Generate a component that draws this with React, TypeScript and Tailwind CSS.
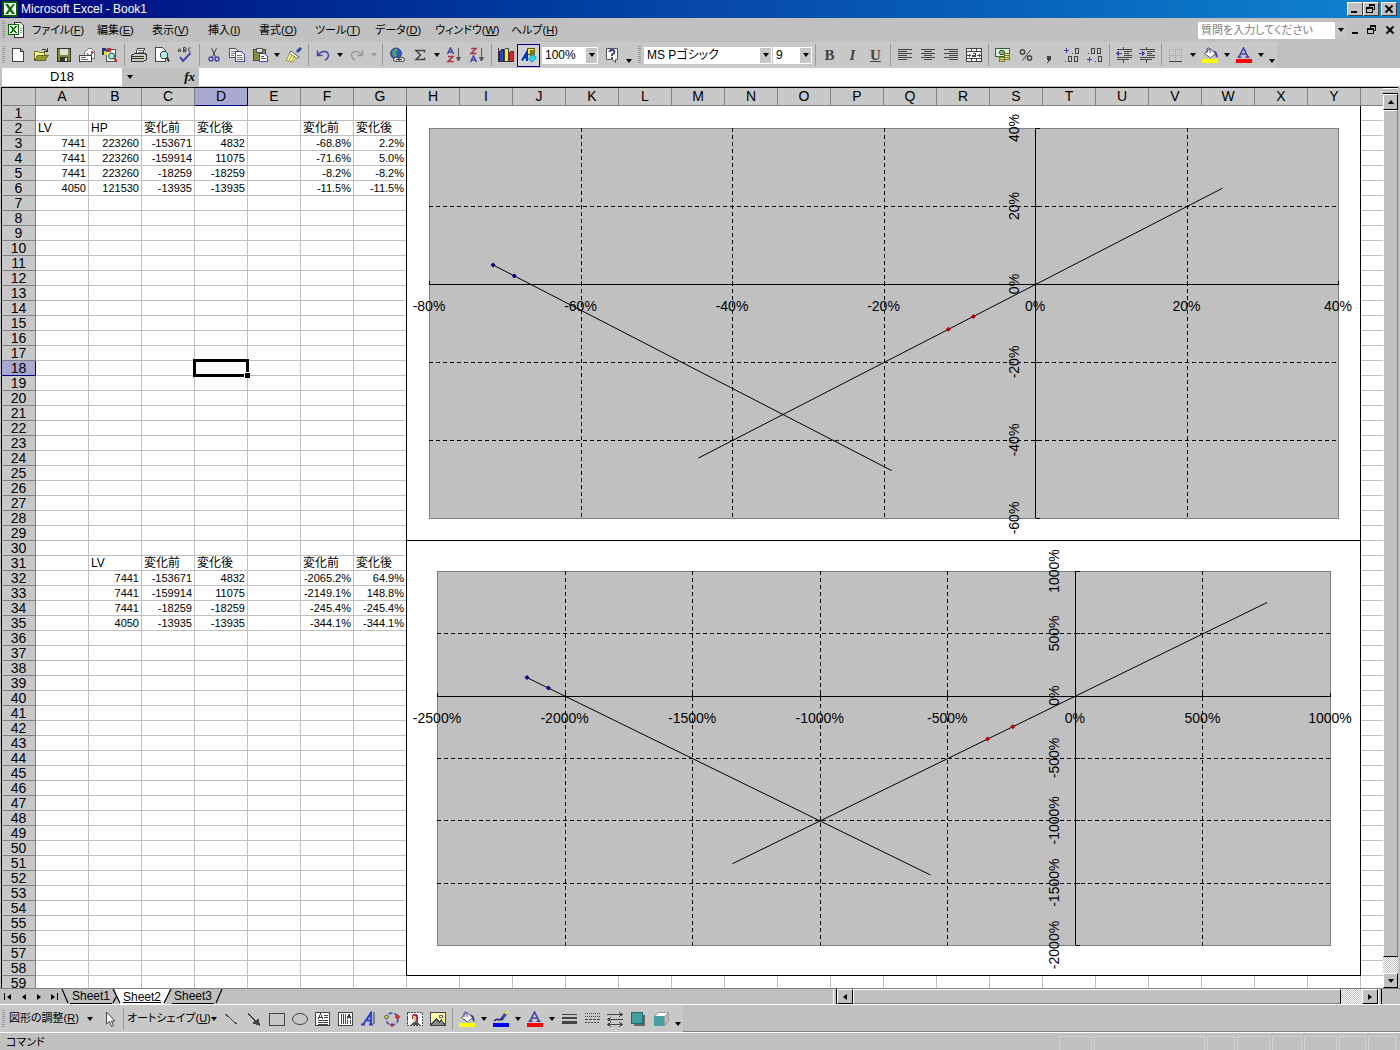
import React from "react";

const COLS = "ABCDEFGHIJKLMNOPQRSTUVWXY".split("");
const ROWS = Array.from({ length: 59 }, (_, i) => i + 1);

const CELLS: Record<number, Record<string, string>> = {
    2: { A: "LV", B: "HP", C: "変化前", D: "変化後", F: "変化前", G: "変化後" },
    3: { A: "7441", B: "223260", C: "-153671", D: "4832", F: "-68.8%", G: "2.2%" },
    4: { A: "7441", B: "223260", C: "-159914", D: "11075", F: "-71.6%", G: "5.0%" },
    5: { A: "7441", B: "223260", C: "-18259", D: "-18259", F: "-8.2%", G: "-8.2%" },
    6: { A: "4050", B: "121530", C: "-13935", D: "-13935", F: "-11.5%", G: "-11.5%" },
    31: { B: "LV", C: "変化前", D: "変化後", F: "変化前", G: "変化後" },
    32: { B: "7441", C: "-153671", D: "4832", F: "-2065.2%", G: "64.9%" },
    33: { B: "7441", C: "-159914", D: "11075", F: "-2149.1%", G: "148.8%" },
    34: { B: "7441", C: "-18259", D: "-18259", F: "-245.4%", G: "-245.4%" },
    35: { B: "4050", C: "-13935", D: "-13935", F: "-344.1%", G: "-344.1%" },
};

const MENUS: [string, string, string][] = [
    ["ファイル", "F", "w-[65px]"],
    ["編集", "E", "w-[55px]"],
    ["表示", "V", "w-[56px]"],
    ["挿入", "I", "w-[51px]"],
    ["書式", "O", "w-[56px]"],
    ["ツール", "T", "w-[60px]"],
    ["データ", "D", "w-[60px]"],
    ["ウィンドウ", "W", "w-[76px]"],
    ["ヘルプ", "H", "w-[60px]"],
];

/* ---------- icons, all on a 16px pixel grid ---------- */

const Svg = ({ children, smooth }: { children: React.ReactNode; smooth?: boolean }) => (
    <svg viewBox="0 0 16 16" className="h-4 w-4 shrink-0" fill="none" shapeRendering={smooth ? "auto" : "crispEdges"} aria-hidden="true">
        {children}
    </svg>
);

const Bucket = () => (
    <>
        <path d="M2.500 6.500l5.500-5 5.500 5-5 4.500z" fill="#fff" stroke="#555" />
        <path d="M5 6V2q1.500-2.500 3 0v4" stroke="#4040a0" />
        <path d="M11 3.500q5 0 4.500 7.500-2.500-1-2.500-5z" fill="#4040a0" />
    </>
);

const SortArrow = () => <path d="M12.500 1v11M10.500 10.500l2 3.500 2-3.500z" stroke="#555" fill="#555" />;

const ICONS: Record<string, React.ReactNode> = {
    excel: (
        <>
            <rect width="16" height="16" fill="#006000" />
            <rect x="2" y="2" width="12" height="12" fill="#fff" />
            <path d="M3 3h3l7 10h-3zM11 3h2L6 13H3z" fill="#007000" />
        </>
    ),
    doc: (
        <>
            <path d="M6.500.5h6l3 3v12h-9z" fill="#fff" stroke="#333" />
            <rect x="0" y="2" width="11" height="11" fill="#007000" />
            <rect x="1" y="3" width="9" height="9" fill="#fff" />
            <path d="M2 4h2l5 7H7zM7 4h2L4 11H2z" fill="#007000" />
            <path d="M12 6h2M12 8h2M12 10h2" stroke="#999" />
        </>
    ),
    new: <path d="M2.500 1.500h8l3 3v10h-11zM10.500 1.500v3h3" fill="#fff" stroke="#444" />,
    open: (
        <>
            <path d="M1.500 13.500v-9h4l1 1h5v3" fill="#ffff99" stroke="#777722" />
            <path d="M1.500 13.500l3-5.500h11l-3.500 5.500z" fill="#999933" stroke="#666622" />
            <path d="M9 3q3-2 5 1M14.500 1v3.500H11" stroke="#333" />
        </>
    ),
    save: (
        <>
            <rect x="1.500" y="1.500" width="13" height="13" fill="#888833" stroke="#333" />
            <rect x="4" y="2" width="8" height="6" fill="#ddd" />
            <rect x="4" y="10" width="8" height="4" fill="#333" />
            <rect x="9" y="11" width="2" height="3" fill="#eee" />
        </>
    ),
    mail: (
        <>
            <path d="M5.500 5.500l4-4h3l3 3v7h-10z" fill="#fff" stroke="#777" />
            <path d="M7 6l3.500 2.500L15 5" stroke="#999" />
            <rect x="12" y="4" width="2" height="2" fill="#c33" />
            <rect x=".5" y="8.500" width="12" height="6" fill="#fff" stroke="#444" />
            <path d="M2 10.500h5M2 12.500h7" stroke="#666" />
        </>
    ),
    search: (
        <>
            <rect x="4.500" y="2.500" width="9" height="12" fill="#fff" stroke="#555" />
            <rect x="0" y="1" width="4" height="3" fill="#223388" />
            <rect x="5" y="1" width="4" height="4" fill="#c03030" />
            <rect x="1" y="5" width="4" height="3" fill="#dddd22" />
            <rect x="0" y="4" width="2" height="4" fill="#333" />
            <circle cx="9.500" cy="9" r="3" fill="#99eeee" stroke="#333" />
            <path d="M12 11.500l3 3" stroke="#c03030" strokeWidth="2" />
        </>
    ),
    print: (
        <>
            <path d="M4.500 7.500l2-6h7l-2 6z" fill="#fff" stroke="#444" />
            <path d="M7 3.500h5M6.500 5.500h5" stroke="#777" />
            <path d="M.5 8.500l3-2h11l1 2v4l-3 2H.5z" fill="#ccc" stroke="#333" />
            <path d="M1 9.500h12M1 11.500h12" stroke="#333" />
            <rect x="8" y="10" width="3" height="1" fill="#dd3" />
        </>
    ),
    preview: (
        <>
            <path d="M1.500.5h7l3 3v11h-10z" fill="#fff" stroke="#444" />
            <circle cx="10" cy="8" r="3.500" fill="#aee" stroke="#444" />
            <path d="M12.500 10.500l3 4" stroke="#444" strokeWidth="2" />
        </>
    ),
    spell: (
        <>
            <path d="M1.500 5V2.500q1-2 2 0V5M1.500 3.500h2M6.500.5v4.500h2q1-1 0-2h-2 2q1-1 0-2.500zM13.500 1q-2-1-2 1.500t2 2" stroke="#444" />
            <path d="M3 10l3 4 7.500-8" stroke="#4444a8" strokeWidth="2" />
        </>
    ),
    cut: (
        <>
            <path d="M5.500 1l4 9M10.500 1l-4 9" stroke="#444" />
            <circle cx="5" cy="12" r="2" stroke="#4444a8" strokeWidth="1.400" />
            <circle cx="11" cy="12" r="2" stroke="#4444a8" strokeWidth="1.400" />
        </>
    ),
    copy: (
        <>
            <path d="M.5 1.500h6l2 2v7h-8z" fill="#fff" stroke="#555" />
            <path d="M2 4.500h4M2 6.500h4M2 8.500h3" stroke="#777" />
            <path d="M6.500 4.500h6l3 3v7h-9z" fill="#fff" stroke="#4444a8" />
            <path d="M8 8.500h5M8 10.500h6M8 12.500h6" stroke="#777" />
        </>
    ),
    paste: (
        <>
            <rect x="1.500" y="2.500" width="12" height="11" fill="#8a8a40" stroke="#444" />
            <rect x="4" y="1" width="6" height="4" fill="#ddd" stroke="#555" />
            <path d="M7.500 6.500h5l3 3v5h-8z" fill="#fff" stroke="#4444a8" />
            <path d="M9 9.500h3M9 11.500h5" stroke="#4444a8" />
        </>
    ),
    brush: (
        <>
            <path d="M15 1l-4 4" stroke="#334499" strokeWidth="3" />
            <path d="M5 4l8 6-2 1.500-8-5.500z" fill="#fff" stroke="#555" />
            <path d="M3.500 6.500l7 5-3.500 3.500-7-1.500z" fill="#f4f4a0" stroke="#999955" />
            <path d="M6 8.500l-3 5M8.500 10l-3 4.500" stroke="#999955" />
        </>
    ),
    undo: <path d="M2.500 3.500v5h5M3 8q4-5 9-3 3 3 0 7l-2 1" stroke="#4444a8" strokeWidth="1.500" />,
    redo: <path d="M13.500 3.500v5h-5M13 8q-4-5-9-3-3 3 0 7l2 1" stroke="#999" strokeWidth="1.500" />,
    link: (
        <>
            <circle cx="7" cy="6.500" r="5.500" fill="#3355cc" stroke="#444488" />
            <path d="M4 3q3-2 5 0l-2 3 1 3-3 1-2-3z" fill="#44aa55" />
            <rect x="4.500" y="10.500" width="6" height="4" rx="2" fill="#ddd" stroke="#444" />
            <rect x="9.500" y="10.500" width="6" height="4" rx="2" fill="#ddd" stroke="#444" />
            <path d="M7 12.500h6" stroke="#444" />
        </>
    ),
    sum: <path d="M12.500 5.500V3.500H4l4.500 4.500L4 12.500h8.500v-2" stroke="#444" strokeWidth="1.500" />,
    sortA: (
        <>
            <path d="M1.500 7L4.500 1l3 6M3 5h3" stroke="#4444a8" strokeWidth="1.500" />
            <path d="M2 9.500h5l-5 5h5.500" stroke="#b03040" strokeWidth="1.500" />
            <SortArrow />
        </>
    ),
    sortZ: (
        <>
            <path d="M2 1.500h5l-5 5h5.500" stroke="#b03040" strokeWidth="1.500" />
            <path d="M1.500 15l3-6 3 6M3 13h3" stroke="#4444a8" strokeWidth="1.500" />
            <SortArrow />
        </>
    ),
    chart: (
        <>
            <path d="M1.500 4.500l2-2h2v12h-4z" fill="#3344bb" stroke="#222266" />
            <path d="M6.500 2.500l1-1h3v13h-4z" fill="#eeee33" stroke="#444" />
            <path d="M11.500 5.500l1-1h3v10h-4z" fill="#dd2222" stroke="#444" />
            <path d="M0 14.500h16M.5 1v14" stroke="#333" />
        </>
    ),
    draw: (
        <>
            <path d="M6.500 1.500h7v6h-7z" fill="#eeee33" stroke="#555500" />
            <path d="M9 3v6l5 1V3z" fill="#777722" />
            <path d="M1 13.500L6 5v9M3 10.500h4" stroke="#0033bb" strokeWidth="2" />
            <path d="M7.500 12l4.500-4.500 3.500 3-4.500 4.500z" fill="#22ddee" stroke="#2299aa" />
        </>
    ),
    help: (
        <>
            <path d="M2.500 1.500h11v11h-2v3l-3-3h-6z" fill="#fffff0" stroke="#555" />
            <path d="M5.500 5q0-2 2.500-2t2.500 2q0 1.500-2.500 2.500v1.500M8 10v2" stroke="#3333aa" strokeWidth="1.800" />
        </>
    ),
    left: <path d="M1 2.500h14M1 4.500h9M1 6.500h14M1 8.500h9M1 10.500h14M1 12.500h9" stroke="#444" />,
    center: <path d="M1 2.500h14M4 4.500h8M1 6.500h14M4 8.500h8M1 10.500h14M4 12.500h8" stroke="#444" />,
    right: <path d="M1 2.500h14M6 4.500h9M1 6.500h14M6 8.500h9M1 10.500h14M6 12.500h9" stroke="#444" />,
    merge: (
        <>
            <path d="M.5 1.500h15v13H.5zM.5 4.500h15M.5 11.500h15M5.500 1v3M10.500 1v3M5.500 12v3M10.500 12v3" fill="#fff" stroke="#444" />
            <path d="M1 8h4M3 6.500v3M11 8h4M13 6.500v3M6.500 6.500h3v3h-3V8h3" stroke="#444" />
        </>
    ),
    money: (
        <>
            <rect x=".5" y="1.500" width="14" height="8" fill="#ddeedd" stroke="#336633" />
            <circle cx="7" cy="5.500" r="2.500" fill="#88aa88" stroke="#336633" />
            <path d="M9.500 6.500h5v6h-5zM4.500 10.500h5v4h-5zM9 8.500h6M9 10.500h6M5 12.500h4" fill="#eeee77" stroke="#777733" />
        </>
    ),
    percent: (
        <>
            <circle cx="4.500" cy="5" r="2.200" stroke="#444" strokeWidth="1.400" />
            <circle cx="11.500" cy="11" r="2.200" stroke="#444" strokeWidth="1.400" />
            <path d="M12.500 3l-8 10.500" stroke="#444" />
        </>
    ),
    comma: <path d="M6 9h4v3l-3 4H6l1.500-3H6z" fill="#444" />,
    decUp: (
        <>
            <path d="M0 3.500h5M2.500 1v5" stroke="#4444a8" />
            <path d="M8 6.500h1M11.500 1.500h3v5h-3zM1 14.500h1M4.500 9.500h3v5h-3zM10.500 9.500h3v5h-3z" stroke="#444" />
        </>
    ),
    decDown: (
        <>
            <path d="M1 6.500h1M4.500 1.500h3v5h-3zM10.500 1.500h3v5h-3zM8 14.500h1M11.500 9.500h3v5h-3z" stroke="#444" />
            <path d="M0 12.500h5M2.500 10v5" stroke="#4444a8" />
        </>
    ),
    outdent: (
        <>
            <path d="M1 2.500h15M8 4.500h8M8 6.500h5M8 8.500h8M1 10.500h15M1 12.500h12M7.500 0v2M7.500 13v3" stroke="#444" />
            <path d="M0 6.500h6M2.500 4v5M1.500 5v3" stroke="#4444a8" />
        </>
    ),
    indent: (
        <>
            <path d="M1 2.500h15M8 4.500h8M8 6.500h5M8 8.500h8M1 10.500h15M1 12.500h12M7.500 0v2M7.500 13v3" stroke="#444" />
            <path d="M0 6.500h6M3.500 4v5M4.500 5v3" stroke="#4444a8" />
        </>
    ),
    borders: (
        <>
            <path d="M1.500 2v12M7.500 2v12M13.500 2v12M1 2.500h13M1 8.500h13" stroke="#999" strokeDasharray="1 1" />
            <path d="M1 14.500h13" stroke="#444" />
        </>
    ),
    fill: (
        <>
            <Bucket />
            <rect y="12" width="16" height="4" fill="#ffff00" />
        </>
    ),
    pen: (
        <>
            <path d="M14 1L8 9" stroke="#334499" strokeWidth="3" />
            <path d="M14.500 0l-2 3" stroke="#eeee44" strokeWidth="3" />
            <path d="M1 10q3-3 5-1l3-1" stroke="#222266" strokeWidth="1.500" />
            <rect y="12" width="16" height="4" fill="#0000ff" />
        </>
    ),
    font: (
        <>
            <path d="M3 10l4.500-9 4.500 9M5 7h5M1.500 10.300h4M9.500 10.300h4" stroke="#4444a8" strokeWidth="1.600" />
            <rect y="12" width="16" height="4" fill="#ff0000" />
        </>
    ),
    cursor: <path d="M5.500 1v12l3-2.500 2 5 2-1-2-4.500h3.500z" fill="#fff" stroke="#444" />,
    line: <path d="M2.500 3l11 10" stroke="#444" />,
    arrow: <path d="M2 2.500l8 8M13.500 14l-1.500-6-4.500 4z" stroke="#444" fill="#444" />,
    rect: <rect x=".5" y="2.500" width="15" height="12" stroke="#444" />,
    oval: <ellipse cx="8" cy="8" rx="7.500" ry="5.500" stroke="#444" />,
    textbox: (
        <>
            <rect x=".5" y="1.500" width="14" height="13" fill="#fff" stroke="#444" />
            <path d="M3 8l2.500-5L8 8M4 6.500h3M9 4.500h4M9 6.500h4M3 9.500h10M3 11.500h10M3 13.500h10" stroke="#444" />
        </>
    ),
    vtext: (
        <>
            <rect x=".5" y="1.500" width="14" height="13" fill="#fff" stroke="#444" />
            <path d="M3.500 3v10M5.500 3v10M7.500 3v10M9.500 9v4M12.500 9v4M9 8l2-5 2 5M10 6.500h3" stroke="#444" />
        </>
    ),
    wordart: (
        <>
            <path d="M0 13.500h4M2.500 13L10 2v12M6 9.500h4M8 13.500h4" stroke="#3344cc" strokeWidth="2.200" />
            <path d="M13 1v12" stroke="#777" strokeWidth="1.800" />
        </>
    ),
    diagram: (
        <>
            <circle cx="8" cy="8" r="6" stroke="#4444a8" strokeWidth="1.500" strokeDasharray="4 2" />
            <circle cx="2.500" cy="6" r="1.800" fill="#dddd33" stroke="#555" />
            <circle cx="13.500" cy="6" r="1.800" fill="#dd3333" stroke="#a33" />
            <circle cx="8" cy="14" r="1.800" fill="#883355" />
        </>
    ),
    clip: (
        <>
            <rect x=".5" y="1.500" width="15" height="13" fill="#fff" stroke="#444" strokeDasharray="2 1" />
            <path d="M5 4q4-3 6 1v6H8L5 8z" fill="#aa3344" />
            <rect x="6" y="5" width="3" height="5" fill="#eebb88" />
            <path d="M4 14l2-3h5l2 3z" fill="#555" />
        </>
    ),
    picture: (
        <>
            <rect x=".5" y="1.500" width="15" height="13" fill="#ffffaa" stroke="#444" />
            <circle cx="11" cy="5.500" r="1.500" fill="#fff" stroke="#666" />
            <path d="M1.500 13l5-5 3 3 2-2 3 4v1h-13z" fill="#888" stroke="#444" />
        </>
    ),
    weight: (
        <>
            <path d="M1 3.500h15" stroke="#444" />
            <path d="M1 7h15" stroke="#444" strokeWidth="2" />
            <path d="M1 11.500h15" stroke="#444" strokeWidth="3" />
        </>
    ),
    dash: (
        <>
            <path d="M1 2.500h15M1 5.500h15" stroke="#444" strokeDasharray="1 1" />
            <path d="M1 8.500h15" stroke="#444" strokeDasharray="3 1" />
            <path d="M1 11.500h15" stroke="#444" strokeDasharray="2 1" />
        </>
    ),
    arrows: <path d="M0 3.500h15M12 1l3 2.500L12 6M16 8.500H1M4 6L1 8.500 4 11M1 13.500h14M12 11l3 2.500-3 2.500M4 11l-3 2.500L4 16" stroke="#444" />,
    shadow: (
        <>
            <rect x="4" y="4" width="11" height="11" fill="#666" />
            <rect x="1.500" y="1.500" width="11" height="11" fill="#44a0a0" stroke="#226666" />
        </>
    ),
    cube: (
        <>
            <path d="M1.500 5.500l4-4h10l-4 4z" fill="#fff" stroke="#999" />
            <path d="M11.500 5.500l4-4v9l-4 4z" fill="#bbb" stroke="#999" />
            <rect x="1" y="5" width="10" height="10" fill="#44a0a0" />
        </>
    ),
};

const SMOOTH = ["cut", "undo", "redo", "sum", "percent", "sortA", "sortZ", "oval", "help", "wordart", "font", "fill", "pen", "cursor", "excel", "spell", "search", "link", "brush", "draw", "diagram"];

const Icon = ({ name }: { name: string }) => <Svg smooth={SMOOTH.includes(name)}>{ICONS[name]}</Svg>;

const Tri = ({ dir = "down", color = "#000" }: { dir?: "down" | "up" | "left" | "right"; color?: string }) => {
    const d = { down: "M1 2h6L4 6z", up: "M1 6h6L4 2z", left: "M6 1v6L2 4z", right: "M2 1v6l4-3z" }[dir];
    return (
        <svg viewBox="0 0 8 8" className="h-2 w-2 shrink-0" aria-hidden="true">
            <path d={d} fill={color} />
        </svg>
    );
};

const WinGlyph = ({ kind }: { kind: string }) => (
    <svg viewBox="0 0 10 10" className="h-[10px] w-[10px]" fill="none" stroke="#000" shapeRendering="crispEdges" aria-hidden="true">
        {kind === "min" && <path d="M1 8h6" strokeWidth="2" />}
        {kind === "restore" && <path d="M3.500 3.500v-3h5v5h-2M3 1h6M.5 3.500h6v5h-6zM0 4h7" />}
        {kind === "close" && <path d="M1.500 1.500l7 7M8.500 1.500l-7 7" strokeWidth="1.800" shapeRendering="auto" />}
    </svg>
);

/* ---------- toolbar parts ---------- */

const Tool = ({ name, active }: { name: string; active?: boolean }) => (
    <button
        type="button"
        aria-label={name}
        className={`flex h-[23px] w-[23px] shrink-0 items-center justify-center ${active ? "border border-[#000080] bg-[#d0d0d8]" : ""}`}
    >
        <Icon name={name} />
    </button>
);

const Drop = ({ label, muted, low }: { label: string; muted?: boolean; low?: boolean }) => (
    <button type="button" aria-label={label} className={`flex h-[23px] w-[11px] shrink-0 justify-center ${low ? "items-end pb-[2px]" : "items-center"}`}>
        <Tri color={muted ? "#999" : "#000"} />
    </button>
);

const Sep = () => (
    <div className="flex w-[6px] shrink-0 justify-center">
        <div className="h-[22px] w-px bg-[#999]" />
    </div>
);

const Grip = () => (
    <svg viewBox="0 0 3 18" className="h-[18px] w-[3px] shrink-0" shapeRendering="crispEdges" aria-hidden="true">
        {[0, 2, 4, 6, 8, 10, 12, 14, 16].map((y) => (
            <rect key={y} y={y} width="3" height="1" fill="#999" />
        ))}
    </svg>
);

const Combo = ({ label, value, width }: { label: string; value: string; width: string }) => (
    <div className={`relative h-[17px] shrink-0 border border-white bg-white ${width}`}>
        <select aria-label={label} className="block h-full w-full appearance-none bg-white pl-[2px] text-xs leading-[14px] text-black outline-none">
            <option>{value}</option>
        </select>
        <span className="pointer-events-none absolute inset-y-0 right-0 flex w-[11px] items-center justify-center bg-[#c6c6c6]">
            <Tri />
        </span>
    </div>
);

const Glyph = ({ label, className }: { label: string; className: string }) => (
    <button type="button" className={`flex h-[23px] w-[23px] shrink-0 items-center justify-center font-['Liberation_Serif',serif] text-[15px] text-[#444] ${className}`}>
        {label}
    </button>
);

const TitleBar = () => (
    <header className="flex h-[18px] shrink-0 items-center gap-[3px] bg-linear-to-r from-[#000080] via-[#0848a8] to-[#1084d0] pr-[3px] pl-[2px] text-white">
        <Icon name="excel" />
        <h1 className="flex-1 text-xs leading-[18px]">Microsoft Excel - Book1</h1>
        <div className="flex">
            {["min", "restore", "close"].map((k) => (
                <button
                    key={k}
                    type="button"
                    aria-label={k}
                    className={`flex h-[14px] w-4 items-center justify-center border border-t-white border-r-[#404040] border-b-[#404040] border-l-white bg-[#c0c0c0] ${k === "close" ? "ml-[2px]" : ""}`}
                >
                    <WinGlyph kind={k} />
                </button>
            ))}
        </div>
    </header>
);

const MenuBar = () => (
    <nav className="flex h-6 shrink-0 items-center pr-[2px] pl-[2px] text-[11px]">
        <Grip />
        <span className="mr-2 ml-[3px] flex">
            <Icon name="doc" />
        </span>
        {MENUS.map(([text, key, width]) => (
            <button key={key} type="button" className={`shrink-0 text-left whitespace-nowrap ${width}`}>
                {text}(<u>{key}</u>)
            </button>
        ))}
        <div className="ml-auto flex h-[17px] w-[148px] bg-white">
            <input aria-label="質問" placeholder="質問を入力してください" className="min-w-0 flex-1 bg-white pl-[3px] text-[11px] outline-none placeholder:text-[#808080]" />
            <button type="button" aria-label="質問の履歴" className="flex w-[11px] items-center justify-center bg-[#c6c6c6]">
                <Tri />
            </button>
        </div>
        <div className="ml-[2px] flex">
            {["min", "restore", "close"].map((k) => (
                <button key={k} type="button" aria-label={`book ${k}`} className={`flex w-4 justify-center ${k === "close" ? "ml-[2px]" : ""}`}>
                    <WinGlyph kind={k} />
                </button>
            ))}
        </div>
    </nav>
);

const Toolbar = () => (
    <div className="flex h-[26px] shrink-0">
        <div className="flex items-center bg-[#c8c8c8] pl-[2px]">
            <Grip />
            <span className="w-px" />
            {["new", "open", "save", "mail", "search"].map((n) => <Tool key={n} name={n} />)}
            <Sep />
            {["print", "preview", "spell"].map((n) => <Tool key={n} name={n} />)}
            <Sep />
            {["cut", "copy", "paste"].map((n) => <Tool key={n} name={n} />)}
            <Drop label="paste options" />
            <Tool name="brush" />
            <Sep />
            <Tool name="undo" />
            <Drop label="undo list" />
            <Tool name="redo" />
            <Drop label="redo list" muted />
            <Sep />
            <Tool name="link" />
            <Tool name="sum" />
            <Drop label="functions" />
            <Tool name="sortA" />
            <Tool name="sortZ" />
            <Sep />
            <Tool name="chart" />
            <Tool name="draw" active />
            <span className="w-[2px]" />
            <Combo label="zoom" value="100%" width="w-[56px]" />
            <span className="w-[2px]" />
            <Tool name="help" />
            <Drop label="standard toolbar options" low />
        </div>
        <div className="flex items-center bg-[#c8c8c8] pl-1">
            <Grip />
            <span className="w-[3px]" />
            <Combo label="font" value="MS Pゴシック" width="w-[128px]" />
            <span className="w-px" />
            <Combo label="font size" value="9" width="w-[39px]" />
            <Sep />
            <Glyph label="B" className="font-black" />
            <Glyph label="I" className="font-bold italic" />
            <Glyph label="U" className="font-bold underline" />
            <Sep />
            {["left", "center", "right", "merge"].map((n) => <Tool key={n} name={n} />)}
            <Sep />
            {["money", "percent", "comma", "decUp", "decDown"].map((n) => <Tool key={n} name={n} />)}
            <Sep />
            <Tool name="outdent" />
            <Tool name="indent" />
            <Sep />
            <Tool name="borders" />
            <Drop label="border list" />
            <Tool name="fill" />
            <Drop label="fill colors" />
            <Tool name="font" />
            <Drop label="font colors" />
            <Drop label="format toolbar options" low />
        </div>
    </div>
);

const FormulaBar = () => (
    <div className="flex h-[19px] shrink-0 pb-px pl-[2px]">
        <input aria-label="name box" defaultValue="D18" className="w-[120px] bg-white text-center text-[13px] outline-none" />
        <button type="button" aria-label="names" className="flex w-4 items-center justify-center">
            <Tri />
        </button>
        <button type="button" className="w-[61px] pr-1 text-right font-['Liberation_Serif',serif] text-[13px] leading-[18px] font-bold italic">
            fx
        </button>
        <input aria-label="formula" className="min-w-0 flex-1 bg-white outline-none" />
    </div>
);

/* ---------- charts ---------- */

type Pt = [number, number];

type ChartProps = {
    name: string;
    plot: { l: number; t: number; r: number; b: number };
    x: { min: number; max: number; step: number };
    y: { min: number; max: number; step: number };
    lines: [Pt, Pt][];
    before: Pt[];
    after: Pt[];
};

const range = ({ min, max, step }: { min: number; max: number; step: number }) =>
    Array.from({ length: Math.round((max - min) / step) + 1 }, (_, i) => min + i * step);

const Chart = ({ name, plot, x, y, lines, before, after }: ChartProps) => {
    const px = (v: number) => plot.l + ((v - x.min) / (x.max - x.min)) * (plot.r - plot.l);
    const py = (v: number) => plot.t + ((y.max - v) / (y.max - y.min)) * (plot.b - plot.t);
    const snap = (v: number) => Math.round(v) + 0.5;
    const ax = snap(px(0));
    const ay = snap(py(0));
    const diamond = ([a, b]: Pt, fill: string) => (
        <path key={`${a}`} d={`M${px(a) - 2} ${py(b) + 0.5}l2.500 -2.500l2.500 2.500l-2.500 2.500z`} fill={fill} />
    );

    return (
        <svg width="955" height="435" viewBox="0 0 955 435" role="img" aria-label={name} className="block bg-white">
            <rect x={plot.l + 0.5} y={plot.t + 0.5} width={plot.r - plot.l} height={plot.b - plot.t} fill="#c0c0c0" stroke="#808080" />
            <g stroke="#000" strokeDasharray="4 3" shapeRendering="crispEdges">
                {range(x).slice(1, -1).filter((v) => v !== 0).map((v) => (
                    <line key={v} x1={snap(px(v))} x2={snap(px(v))} y1={plot.t} y2={plot.b} />
                ))}
                {range(y).slice(1, -1).filter((v) => v !== 0).map((v) => (
                    <line key={v} x1={plot.l} x2={plot.r} y1={snap(py(v))} y2={snap(py(v))} />
                ))}
            </g>
            <g stroke="#000" shapeRendering="crispEdges">
                <path d={`M${plot.l} ${ay}H${plot.r}M${ax} ${plot.t}V${plot.b}`} />
                {range(x).map((v) => <path key={v} d={`M${snap(px(v))} ${ay - 4}v4`} />)}
                {range(y).map((v) => <path key={v} d={`M${ax} ${snap(py(v))}h4`} />)}
            </g>
            <g stroke="#000">
                {lines.map(([a, b], i) => (
                    <line key={i} x1={px(a[0]) + 0.5} y1={py(a[1]) + 0.5} x2={px(b[0]) + 0.5} y2={py(b[1]) + 0.5} />
                ))}
            </g>
            {before.map((p) => diamond(p, "#000080"))}
            {after.map((p) => diamond(p, "#c00000"))}
            <g fontSize="14" fill="#000" textAnchor="middle">
                {range(x).map((v) => (
                    <text key={v} x={px(v)} y={ay + 26}>{v}%</text>
                ))}
                {range(y).map((v) => (
                    <text key={v} transform={`translate(${ax - 17} ${py(v)}) rotate(-90)`}>{v}%</text>
                ))}
            </g>
            <path d="M.5 0V434.500H954.500V0" fill="none" stroke="#000" shapeRendering="crispEdges" />
        </svg>
    );
};

/* ---------- sheet ---------- */

const isNumber = (v: string) => /^-?\d/.test(v);

const Grid = () => (
    <table className="w-max table-fixed border-separate border-spacing-0">
        <thead>
            <tr className="h-[18px]">
                <th className="w-[34px] border-r border-b border-[#808080] bg-[#c8c8c8] p-0" />
                {COLS.map((c) => (
                    <th
                        key={c}
                        scope="col"
                        className={`w-[53px] border-r border-b p-0 text-sm leading-[17px] font-normal ${c === "D" ? "border-[#000080] bg-[#a8a8d0]" : "border-[#808080] bg-[#c8c8c8]"}`}
                    >
                        {c}
                    </th>
                ))}
                <th className="w-[53px] border-r border-b border-[#808080] bg-[#c8c8c8] p-0" />
            </tr>
        </thead>
        <tbody>
            {ROWS.map((r) => (
                <tr key={r} className="h-[15px]">
                    <th
                        scope="row"
                        className={`border-r border-b p-0 text-sm leading-[14px] font-normal ${r === 18 ? "border-[#000080] bg-[#a8a8d0]" : "border-[#808080] bg-[#c8c8c8]"}`}
                    >
                        {r}
                    </th>
                    {COLS.map((c) => {
                        const v = CELLS[r]?.[c] ?? "";
                        const selected = r === 18 && c === "D";
                        return (
                            <td
                                key={c}
                                className={`border-r border-b border-[#c0c0c0] px-[2px] py-0 leading-[14px] whitespace-nowrap ${isNumber(v) ? "text-right text-[11px]" : "text-xs"} ${selected ? "relative" : ""}`}
                            >
                                {v}
                                {selected && (
                                    <span className="absolute -inset-[2px] border-[3px] border-black">
                                        <span className="absolute -right-1 -bottom-1 h-[6px] w-[6px] border-t border-l border-white bg-black" />
                                    </span>
                                )}
                            </td>
                        );
                    })}
                    <td className="border-r border-b border-[#c0c0c0] p-0" />
                </tr>
            ))}
        </tbody>
    </table>
);

const BAR_BUTTON = "flex shrink-0 items-center justify-center border border-t-white border-r-black border-b-black border-l-white bg-[#c0c0c0]";
const DITHER = "bg-[repeating-conic-gradient(#c0c0c0_0_25%,#ffffff_0_50%)] bg-size-[2px_2px]";

const Sheet = () => (
    <main className="flex min-h-0 flex-1 pr-[2px] pl-px">
        <div className="relative min-w-0 flex-1 overflow-hidden border-t border-l border-black bg-white">
            <Grid />
            {/* both charts float over columns H to Y */}
            <div className="absolute top-[18px] left-[404px]">
                <Chart
                    name="変化前 / 変化後 (HP)"
                    plot={{ l: 23, t: 22, r: 932, b: 412 }}
                    x={{ min: -80, max: 40, step: 20 }}
                    y={{ min: -60, max: 40, step: 20 }}
                    lines={[[[-71.6, 5], [-19, -47.7]], [[-44.5, -44.5], [24.7, 24.7]]]}
                    before={[[-71.6, 5], [-68.8, 2.2]]}
                    after={[[-8.2, -8.2], [-11.5, -11.5]]}
                />
                <Chart
                    name="変化前 / 変化後 (LV)"
                    plot={{ l: 31, t: 30, r: 924, b: 404 }}
                    x={{ min: -2500, max: 1000, step: 500 }}
                    y={{ min: -2000, max: 1000, step: 500 }}
                    lines={[[[-2149.1, 148.8], [-568, -1434]], [[-1344, -1344], [752, 752]]]}
                    before={[[-2149.1, 148.8], [-2065.2, 64.9]]}
                    after={[[-245.4, -245.4], [-344.1, -344.1]]}
                />
            </div>
        </div>
        <div className={`flex w-[15px] shrink-0 flex-col border-t border-black ${DITHER}`}>
            <div className="h-[6px] shrink-0 border-t border-b border-t-white border-b-black bg-[#c0c0c0]" />
            <button type="button" aria-label="up" className={`h-4 ${BAR_BUTTON}`}>
                <Tri dir="up" />
            </button>
            <div className="flex-1 border border-t-white border-r-[#808080] border-b-black border-l-white bg-[#c0c0c0]" />
            <div className="h-4" />
            <button type="button" aria-label="down" className={`h-[15px] ${BAR_BUTTON}`}>
                <Tri dir="down" />
            </button>
        </div>
    </main>
);

const TabNav = ({ label, dir, end }: { label: string; dir: "left" | "right"; end?: boolean }) => (
    <button type="button" aria-label={label} className="flex w-[15px] shrink-0 items-center justify-center">
        {end && dir === "left" && <span className="h-[7px] w-px bg-black" />}
        <Tri dir={dir} />
        {end && dir === "right" && <span className="h-[7px] w-px bg-black" />}
    </button>
);

const Slant = ({ white, d }: { white?: string; d: string }) => (
    <svg viewBox="0 0 9 15" className="h-[15px] w-[9px] shrink-0" fill="none" aria-hidden="true">
        {white && <path d={white} fill="#fff" />}
        <path d={d} stroke="#000" strokeWidth="1.200" />
    </svg>
);

const TabRow = () => (
    <div className="flex h-4 shrink-0 border-t border-[#808080] pr-[2px] text-xs leading-[14px]">
        <div className="flex min-w-0 flex-1 pl-px">
            <TabNav label="first sheet" dir="left" end />
            <TabNav label="previous sheet" dir="left" />
            <TabNav label="next sheet" dir="right" />
            <TabNav label="last sheet" dir="right" end />
            <Slant d="M1 0L7 14" />
            <button type="button" className="w-[42px] border-b border-black">Sheet1</button>
            <Slant white="M3 0h6v15H8z" d="M1 14l3-6M1 0l7 14" />
            <button type="button" className="w-[42px] bg-white underline">Sheet2</button>
            <Slant white="M0 0h7L1 15H0z" d="M8 0L1 14" />
            <button type="button" className="w-[42px] border-b border-black">Sheet3</button>
            <Slant d="M8 0L2 14" />
        </div>
        <div className={`flex w-[549px] shrink-0 ${DITHER}`}>
            <div className="w-1 border-r border-l border-r-black border-l-white bg-[#c0c0c0]" />
            <button type="button" aria-label="left" className={`w-4 ${BAR_BUTTON}`}>
                <Tri dir="left" />
            </button>
            <div className="flex-1 border border-t-white border-r-black border-b-[#808080] border-l-white bg-[#c0c0c0]" />
            <div className="w-[21px]" />
            <button type="button" aria-label="right" className={`w-4 ${BAR_BUTTON}`}>
                <Tri dir="right" />
            </button>
            <div className="w-1 border-r border-l border-r-black border-l-white bg-[#c0c0c0]" />
        </div>
        <div className="w-4 shrink-0" />
    </div>
);

const DrawingBar = () => (
    <div className="flex h-[29px] shrink-0 border-t border-b border-white">
        <div className="flex items-center bg-[#c8c8c8] pl-[2px] text-[11px]">
            <Grip />
            <button type="button" className="ml-1 w-[75px] shrink-0 text-left whitespace-nowrap">図形の調整(<u>R</u>)</button>
            <Drop label="draw menu" />
            <span className="w-[2px]" />
            <Tool name="cursor" />
            <Sep />
            <button type="button" className="ml-px w-[81px] shrink-0 text-left whitespace-nowrap">オートシェイプ(<u>U</u>)</button>
            <Drop label="autoshapes menu" />
            {["line", "arrow", "rect", "oval", "textbox", "vtext", "wordart", "diagram", "clip", "picture"].map((n) => (
                <Tool key={n} name={n} />
            ))}
            <Sep />
            <Tool name="fill" />
            <Drop label="shape fill colors" />
            <Tool name="pen" />
            <Drop label="line colors" />
            <Tool name="font" />
            <Drop label="text colors" />
            {["weight", "dash", "arrows", "shadow", "cube"].map((n) => (
                <Tool key={n} name={n} />
            ))}
            <Drop label="drawing toolbar options" low />
        </div>
        <div className="flex-1 border-b border-[#808080]" />
    </div>
);

const PANES = ["w-[33px]", "w-[111px]", "w-[28px]", "w-[33px]", "w-[30px]", "w-[33px]", "w-[27px]", "w-[28px]"];

const StatusBar = () => (
    <footer className="flex h-[17px] shrink-0 items-end justify-between pr-1 pl-[6px] text-[11px] leading-4">
        <span>コマンド</span>
        <div className="flex h-[14px] gap-[2px]">
            {PANES.map((w, i) => (
                <span key={i} className={`border-t border-r border-l border-[#d0d0d0] ${w}`} />
            ))}
        </div>
    </footer>
);

export default function App() {
    return (
        <div className="flex h-screen flex-col overflow-hidden bg-[#c0c0c0] font-['Liberation_Sans','Noto_Sans_CJK_JP',sans-serif] text-black [font-feature-settings:'palt']">
            <TitleBar />
            <MenuBar />
            <Toolbar />
            <FormulaBar />
            <Sheet />
            <TabRow />
            <DrawingBar />
            <StatusBar />
        </div>
    );
}
